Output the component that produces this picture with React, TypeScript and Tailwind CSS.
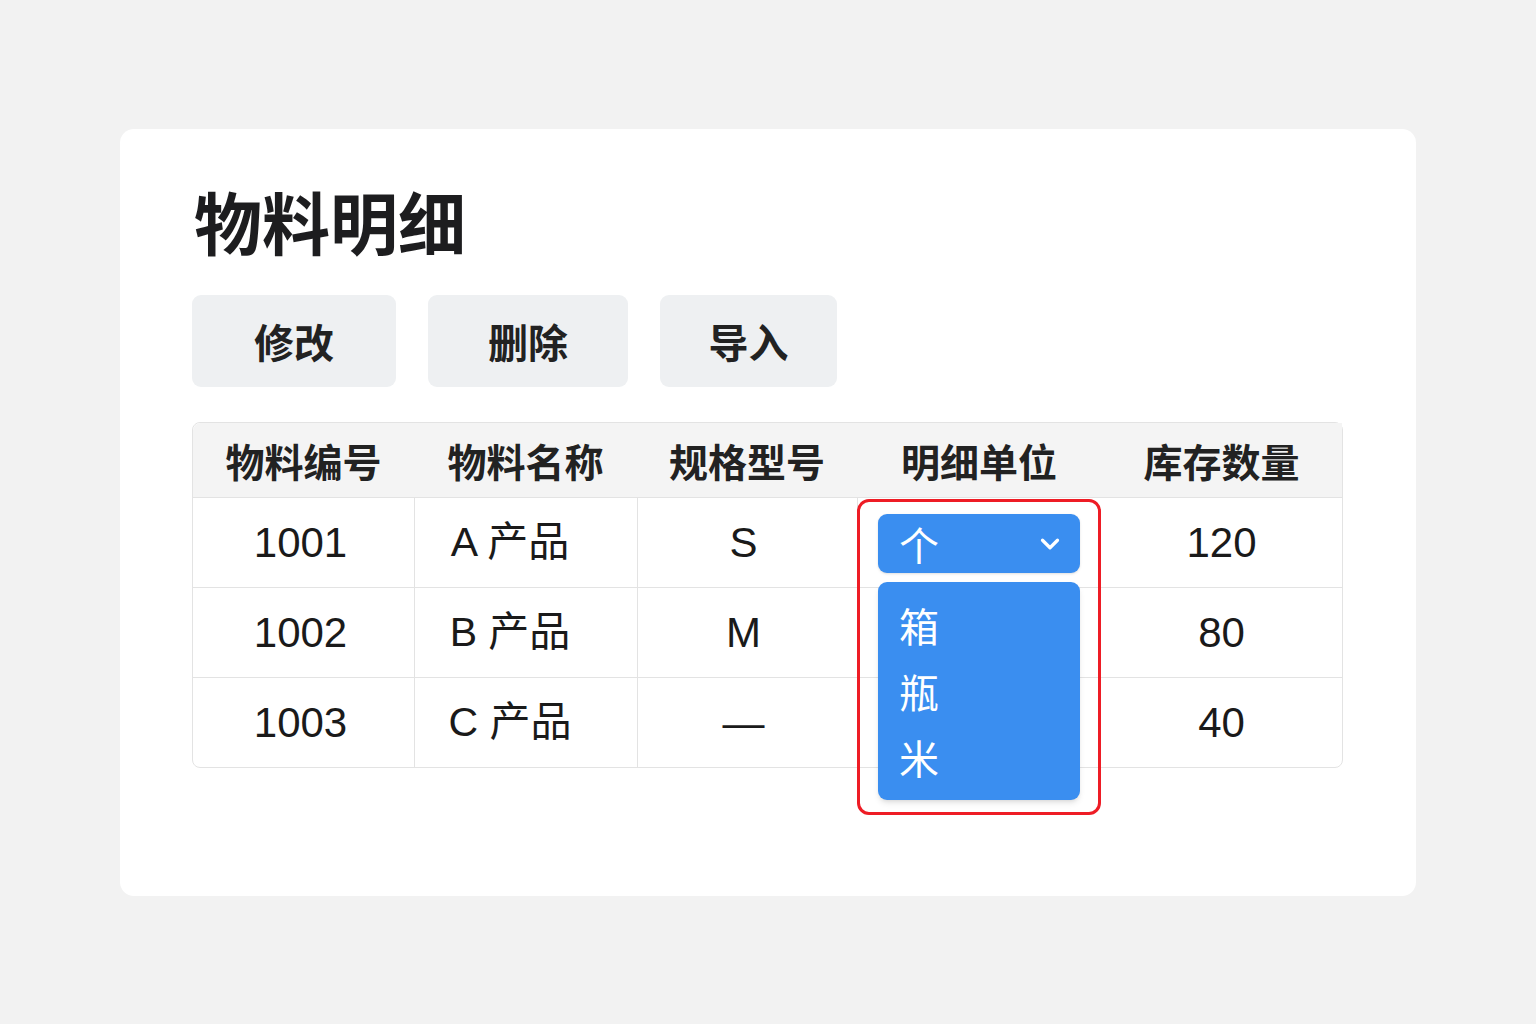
import { ChevronDown } from 'lucide-react'

const font = { fontFamily: '"Noto Sans CJK SC", "Noto Sans", sans-serif' }
const bodyFont = { fontFamily: '"Liberation Sans", "Noto Sans CJK SC", sans-serif' }

const columns = ['物料编号', '物料名称', '规格型号', '明细单位', '库存数量']

const rows = [
  { code: '1001', name: 'A 产品', spec: 'S', qty: '120' },
  { code: '1002', name: 'B 产品', spec: 'M', qty: '80' },
  { code: '1003', name: 'C 产品', spec: '—', qty: '40' },
]

const actions = [
  { label: '修改', w: 'w-[204px]' },
  { label: '删除', w: 'w-[200px]' },
  { label: '导入', w: 'w-[177px]' },
]

function UnitDropdown() {
  // red highlight box with the open select over the unit column
  return (
    <div className="absolute left-[664px] top-[76px] w-[244px] h-[316px] border-[3px] border-[#ee1c25] rounded-[12px] px-[18px] pt-[12px] flex flex-col gap-[9px]">
      <div className="h-[59px] bg-[#3a8ef0] rounded-[9px] flex items-center justify-between pl-[21px] pr-[15px] text-white text-[40px] leading-none shadow-sm">
        <span>个</span>
        <ChevronDown size={30} strokeWidth={2.6} />
      </div>
      <div className="h-[218px] bg-[#3a8ef0] rounded-[9px] shadow-md py-[10px] text-white text-[40px] leading-none">
        {['箱', '瓶', '米'].map((u) => (
          <div key={u} className="h-[66px] flex items-center pl-[21px]">
            {u}
          </div>
        ))}
      </div>
    </div>
  )
}

export default function App() {
  return (
    <div className="min-h-screen bg-[#f2f2f2] pt-[129px] pl-[120px]" style={font}>
      <div className="w-[1296px] h-[767px] bg-white rounded-[14px] px-[72px] pt-[58px]">
        <h1 className="text-[68px] font-bold leading-none text-[#1d1d1f] pl-[2px]">物料明细</h1>

        <div className="flex gap-[32px] mt-[40px]">
          {actions.map((a) => (
            <button
              key={a.label}
              className={`${a.w} h-[92px] bg-[#eef0f2] rounded-[9px] text-[40px] font-semibold text-[#222] leading-none`}
            >
              {a.label}
            </button>
          ))}
        </div>

        <div className="relative mt-[35px] w-[1151px] border border-[#e3e3e3] rounded-[8px]">
          <div className="grid grid-cols-[221px_223px_220px_244px_241px]">
            {columns.map((c) => (
              <div
                key={c}
                className="h-[74px] bg-[#f4f4f4] flex items-center justify-center text-[39px] font-semibold text-[#222] leading-none first:rounded-tl-[8px] last:rounded-tr-[8px]"
              >
                {c}
              </div>
            ))}
            {rows.map((r) => (
              <div key={r.code} className="contents" style={bodyFont}>
                <div className="h-[90px] border-t border-[#e3e3e3] flex items-center justify-center pr-[6px] text-[42px] text-[#1a1a1a] leading-none">
                  {r.code}
                </div>
                <div className="h-[90px] border-t border-l border-[#e3e3e3] flex items-center justify-center pr-[32px] text-[41px] text-[#1a1a1a] leading-none">
                  {r.name}
                </div>
                <div className="h-[90px] border-t border-l border-[#e3e3e3] flex items-center justify-center pr-[8px] text-[42px] text-[#1a1a1a] leading-none">
                  {r.spec}
                </div>
                <div className="h-[90px] border-t border-l border-[#e3e3e3]" />
                <div className="h-[90px] border-t border-[#e3e3e3] flex items-center justify-center text-[42px] text-[#1a1a1a] leading-none">
                  {r.qty}
                </div>
              </div>
            ))}
          </div>
          <UnitDropdown />
        </div>
      </div>
    </div>
  )
}
